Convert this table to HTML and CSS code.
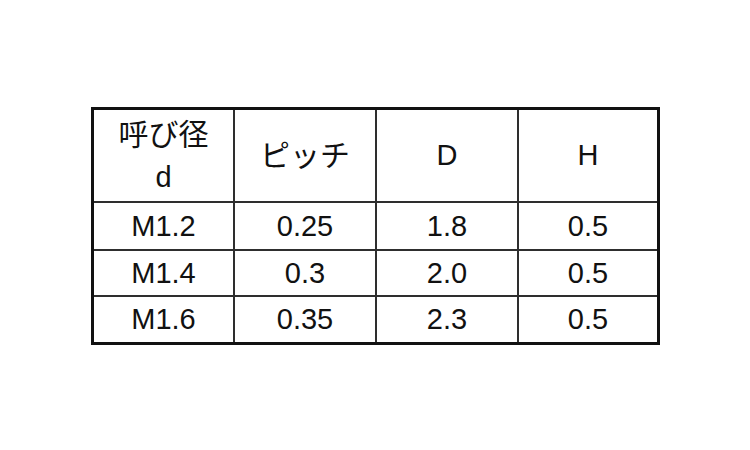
FILE: index.html
```html
<!DOCTYPE html>
<html lang="ja">
<head>
<meta charset="utf-8">
<title>寸法表</title>
<link rel="stylesheet" href="styles.css">
</head>
<body>
<div class="page">
  <div class="spec" role="table">
    <div class="cell head two"><span class="jp">呼び径</span><span>d</span></div>
    <div class="cell head jp">ピッチ</div>
    <div class="cell head">D</div>
    <div class="cell head last">H</div>

    <div class="cell">M1.2</div>
    <div class="cell">0.25</div>
    <div class="cell">1.8</div>
    <div class="cell last">0.5</div>

    <div class="cell">M1.4</div>
    <div class="cell">0.3</div>
    <div class="cell">2.0</div>
    <div class="cell last">0.5</div>

    <div class="cell bottom">M1.6</div>
    <div class="cell bottom">0.35</div>
    <div class="cell bottom">2.3</div>
    <div class="cell bottom last">0.5</div>
  </div>
</div>
</body>
</html>
```

FILE: styles.css
```css
html, body {
  margin: 0;
  padding: 0;
  background: #ffffff;
}

.page {
  padding: 107px 0 0 91px;
}

.spec {
  display: grid;
  grid-template-columns: 141px 142px 142px 138px;
  grid-template-rows: 93px 48px 46px 45px;
  width: max-content;
  border: 3px solid #111111;
  font-family: "Liberation Sans", "Noto Sans CJK JP", sans-serif;
  font-size: 29px;
  color: #111111;
}

.cell {
  box-sizing: border-box;
  display: flex;
  align-items: center;
  justify-content: center;
  border-right: 2px solid #2e2e2e;
  border-bottom: 2px solid #2e2e2e;
  line-height: 1;
}

.cell.last {
  border-right: none;
}

.cell.bottom {
  border-bottom: none;
}

.jp {
  font-size: 30px;
}

.two {
  flex-direction: column;
  line-height: 43px;
}
```
